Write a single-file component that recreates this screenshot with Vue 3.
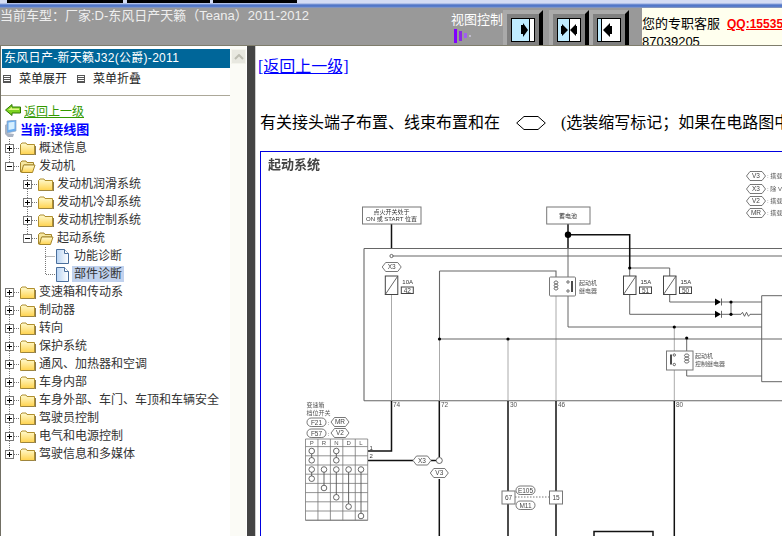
<template>
  <div class="page">
    <svg class="defs" width="0" height="0">
      <defs>
        <linearGradient id="folderFill" x1="0" y1="0" x2="0" y2="1">
          <stop offset="0" stop-color="#fffbd0" />
          <stop offset="1" stop-color="#ffd24d" />
        </linearGradient>
        <linearGradient id="docFill" x1="0" y1="0" x2="1" y2="0">
          <stop offset="0" stop-color="#b8d4f4" />
          <stop offset="1" stop-color="#ffffff" />
        </linearGradient>
      </defs>
    </svg>

    <div class="strip">
      <span class="tab first"></span>
      <span class="tab second"></span>
      <span class="tab third"></span>
    </div>

    <header class="top">
      <div class="car">当前车型：厂家:D-东风日产天籁（Teana）2011-2012</div>
      <div class="view">
        <div class="view-label">视图控制</div>
        <svg class="bars" width="18" height="15" viewBox="0 0 18 15">
          <path d="M0 0h3v14H0z" fill="#8000ff" />
          <path d="M5 2h3v10H5z" fill="#8a2be2" />
          <path d="M10 4h3v5h-3z" fill="#a060f0" />
          <path d="M15 6.500h2v1h-2z" fill="#e8e0ff" />
        </svg>
      </div>
      <div class="view-btns">
        <div class="view-btn">
          <svg width="24" height="24" viewBox="0 0 24 24">
            <rect x=".5" y=".5" width="23" height="23" fill="#c0ecff" stroke="#000" />
            <rect x="19" y="1" width="4" height="22" fill="#fff" />
            <path d="M18.5 1v22" stroke="#000" />
            <path d="M11 7h2V5l5 7-5 7v-3h-2z" fill="#000" transform="translate(-1 0)" />
          </svg>
        </div>
        <div class="view-btn">
          <svg width="24" height="24" viewBox="0 0 24 24">
            <rect x=".5" y=".5" width="23" height="23" fill="#fff" stroke="#000" />
            <rect x="1" y="1" width="11" height="22" fill="#c0ecff" />
            <path d="M12.5 1v22" stroke="#000" />
            <path d="M4 8h1V6l6 6-6 6v-2H4zM20 8h-1V6l-6 6 6 6v-2h1z" fill="#000" />
          </svg>
        </div>
        <div class="view-btn">
          <svg width="24" height="24" viewBox="0 0 24 24">
            <rect x=".5" y=".5" width="23" height="23" fill="#fff" stroke="#000" />
            <rect x="1" y="1" width="3" height="22" fill="#c0ecff" />
            <path d="M4.5 1v22" stroke="#000" />
            <path d="M13 8h2v8h-2v3l-7-7 7-7z" fill="#000" />
          </svg>
        </div>
      </div>
      <div class="service">
        <div class="service-line">您的专职客服<a class="qq">QQ:15535</a></div>
        <div class="service-line second-line">87039205</div>
      </div>
    </header>

    <main class="body">
      <aside class="left">
        <div class="left-inner">
          <div class="model">东风日产-新天籁J32(公爵)-2011</div>
          <div class="menu">
            <span class="menu-item"><i class="menu-icon"></i>菜单展开</span>
            <span class="menu-item"><i class="menu-icon"></i>菜单折叠</span>
          </div>
          <div class="tree">
            <a class="back">
              <svg width="16" height="12" viewBox="0 0 16 12">
                <path d="M.5 6 7 .5V3h8.500v6H7v2.500z" fill="#7ed321" stroke="#2f7a00" />
                <path d="M3 6l4-3v1.500h7V6z" fill="#e4f78a" />
              </svg>
              <span>返回上一级</span>
            </a>
            <div class="current">
              <svg width="13" height="18" viewBox="0 0 13 18">
                <path d="M3 1l9-1v11l-9 2z" fill="#6aaef0" stroke="#8fa5c0" stroke-width=".7" />
                <path d="M4.500 2.500l6-.7v7l-6 1.200z" fill="#d5efff" />
                <path d="M1 5l2-1v9l7 1-1 3H4l-3-3z" fill="#aab4c4" />
              </svg>
              <span>当前:接线图</span>
            </div>
            <div v-for="row in rows" :key="row.label" class="row" :class="'level' + row.level">
              <svg v-if="row.kind !== 'doc'" class="node" width="18" height="18" viewBox="0 0 18 18">
                <path v-if="row.up" d="M8.500 0v5" class="dots" />
                <path v-if="row.down" d="M8.500 14v4" class="dots" />
                <path d="M13 9.500h5" class="dots" />
                <rect x="4.500" y="5.500" width="8" height="8" fill="#fff" stroke="#777" />
                <path d="M6 9.500h5" stroke="#000" />
                <path v-if="!row.open" d="M8.500 7v5" stroke="#000" />
              </svg>
              <svg v-else class="node" width="18" height="18" viewBox="0 0 18 18">
                <path :d="row.last ? 'M8.500 0v9.500H18' : 'M8.500 0v18M8.500 9.500H18'" class="dots" />
              </svg>

              <svg v-if="row.kind === 'doc'" class="doc" width="13" height="15" viewBox="0 0 13 15">
                <path d="M.5.5h8l4 4v10H.5z" fill="url(#docFill)" stroke="#4a6f9c" />
                <path d="M8.500.5v4h4" fill="#fff" stroke="#4a6f9c" />
              </svg>
              <svg v-else-if="row.open" class="folder" width="16" height="13" viewBox="0 0 16 13">
                <path d="M.5 2.500 2 1h4l1 1.500h6.500V5H4L1.500 12H.5z" fill="#f6e7a0" stroke="#a5862a" />
                <path d="M3.500 5H15l-2.500 7.500h-11z" fill="url(#folderFill)" stroke="#a5862a" />
              </svg>
              <svg v-else class="folder" width="16" height="13" viewBox="0 0 16 13">
                <path d="M.5 2.500 2 1h4l1 1.500h7.500v10H.5z" fill="url(#folderFill)" stroke="#b08f2e" />
                <path d="M15.500 4v9H2" fill="none" stroke="#8a7a50" />
              </svg>
              <span class="label" :class="{ selected: row.selected }">{{ row.label }}</span>
            </div>
          </div>
        </div>
        <div class="scrollbar">
          <div class="scroll-up">
            <svg width="10" height="6" viewBox="0 0 10 6">
              <path d="M1 5l4-4 4 4" fill="none" stroke="#bdbdb2" stroke-width="2" />
            </svg>
          </div>
        </div>
      </aside>
      <div class="split"></div>

      <section class="content">
        <a class="up-link">[返回上一级]</a>
        <p class="note">
          有关接头端子布置、线束布置和在
          <svg class="note-hex" width="30" height="14" viewBox="0 0 30 14">
            <path d="M.7 7 8 .5h14L29.300 7 22 13.500H8z" fill="#fff" stroke="#000" />
          </svg>
          (选装缩写标记；如果在电路图中
        </p>
        <div class="figure">
          <svg class="diagram" width="530" height="390" viewBox="261 152 530 390">
            <text x="268" y="169" class="title">起动系统</text>

            <path v-for="d in lightWires" :key="d" :d="d" class="wire light" />
            <path v-for="d in thinWires" :key="d" :d="d" class="wire thin" />
            <path v-for="d in frameWires" :key="d" :d="d" class="wire frame" />
            <path v-for="d in heavyWires" :key="d" :d="d" class="wire heavy" />
            <path d="M515 497H549" class="wire dashed" />

            <circle v-for="p in dots" :key="p.join()" :cx="p[0]" :cy="p[1]" :r="p[2]" fill="#000" />

            <g class="box">
              <rect x="362.500" y="207" width="58.500" height="17" />
              <rect x="546.700" y="207" width="43.300" height="17" />
              <rect x="502" y="491" width="13" height="13" />
              <rect x="549.500" y="491" width="13" height="13" />
              <rect x="549.500" y="277" width="26" height="19" rx="1" />
              <rect x="666.500" y="351" width="26.500" height="19" />
            </g>
            <text x="391.500" y="214" class="small mid">点火开关处于</text>
            <text x="391.500" y="221" class="small mid">ON 或 START 位置</text>
            <text x="568" y="218" class="small mid">蓄电池</text>
            <text x="508.500" y="500" class="tiny mid">67</text>
            <text x="556" y="500" class="tiny mid">15</text>

            <g v-for="f in fuses" :key="f.no">
              <rect :x="f.x" y="276" width="12.500" height="18.500" class="fuse" />
              <path :d="`M${f.x} 294.500L${f.x + 12.500} 276`" class="wire thin" />
              <text :x="f.x + 17" y="284" class="small">{{ f.amp }}</text>
              <rect :x="f.x + 16" y="287" width="12" height="6.500" class="fuse" />
              <text :x="f.x + 22" y="292.500" class="tiny mid">{{ f.no }}</text>
            </g>

            <path d="M556 281c-2.500 0-2.500 3 0 3c-2.500 0-2.500 3 0 3c-2.500 0-2.500 3 0 3" class="wire thin" />
            <path d="M556 281c2.500 0 2.500 3 0 3c2.500 0 2.500 3 0 3c2.500 0 2.500 3 0 3" class="wire thin" />
            <path d="M572 281v11" class="wire heavy" />
            <circle cx="568" cy="282" r="1.200" class="pin" />
            <circle cx="568" cy="291" r="1.200" class="pin" />
            <text x="579" y="284.500" class="small gray">起动机</text>
            <text x="579" y="292.500" class="small gray">继电器</text>

            <path d="M686.700 354c-3 0-3 3 0 3c-3 0-3 3 0 3c-3 0-3 3 0 3c3 0 3-3 0-3c3 0 3-3 0-3c3 0 3-3 0-3" class="wire thin" />
            <path d="M671 354.500v10" class="wire heavy" />
            <circle cx="674.300" cy="355" r="1.200" class="pin" />
            <circle cx="674.300" cy="364.500" r="1.200" class="pin" />
            <text x="695" y="358" class="small gray">起动机</text>
            <text x="695" y="366" class="small gray">控制继电器</text>

            <path d="M715 298.500l6 3.500-6 3.500zM715 310.800l6 3.500-6 3.500z" fill="#000" />
            <path d="M721.500 298.500v7M721.500 310.800v7" class="wire thin" />
            <path d="M741 314.300l1.500-2 2 4 2-4 2 4 1.500-2" class="wire thin" fill="none" />

            <g v-for="h in hexes" :key="h.t + h.x + h.y">
              <path :d="hexPath(h.x, h.y, h.w, 9)" class="hex" />
              <text :x="h.x" :y="h.y + 2.300" class="tiny mid">{{ h.t }}</text>
            </g>
            <circle cx="391.500" cy="256" r="1.600" class="pin" />
            <circle cx="439.300" cy="460.500" r="3" class="pin" />
            <g v-for="o in ovals" :key="o.t">
              <rect :x="o.x" :y="o.y" :width="o.w" height="8.500" rx="4.200" class="hex" />
              <text :x="o.x + o.w / 2" :y="o.y + 6.500" class="tiny mid">{{ o.t }}</text>
            </g>

            <text v-for="l in legend" :key="l.y" x="767" :y="l.y" class="small gray">{{ l.t }}</text>
            <text v-for="n in wireNumbers" :key="n.t" :x="n.x" y="406.500" class="tiny gray">{{ n.t }}</text>

            <text x="306.500" y="406.500" class="small gray">变速箱</text>
            <text x="306.500" y="414.500" class="small gray">档位开关</text>
            <text x="327.500" y="424.500" class="small">:</text>
            <text x="327.500" y="435.500" class="small">:</text>

            <path :d="tableGrid" class="wire table" />
            <text v-for="(c, i) in columns" :key="c" :x="colX[i]" y="445" class="small mid gray">{{ c }}</text>
            <text x="369.500" y="449.500" class="small">1</text>
            <text x="369.500" y="458" class="small">2</text>
            <path v-for="c in switchLinks" :key="c.join()" :d="`M${colX[c[0]]} ${rowY[c[1]]}V${rowY[c[2]]}`" class="wire thin" />
            <circle v-for="c in switchPins" :key="c.join()" :cx="colX[c[0]]" :cy="rowY[c[1]]" r="2.800" class="pin" />

            <rect x="594" y="531.500" width="59" height="12" class="wire heavy" fill="none" />
          </svg>
        </div>
      </section>
    </main>
  </div>
</template>

<script setup>
const rows = [
  { label: '概述信息', level: 1, kind: 'folder', up: true, down: true },
  { label: '发动机', level: 1, kind: 'folder', up: true, open: true },
  { label: '发动机润滑系统', level: 2, kind: 'folder', up: true, down: true },
  { label: '发动机冷却系统', level: 2, kind: 'folder', up: true, down: true },
  { label: '发动机控制系统', level: 2, kind: 'folder', up: true, down: true },
  { label: '起动系统', level: 2, kind: 'folder', up: true, open: true },
  { label: '功能诊断', level: 3, kind: 'doc' },
  { label: '部件诊断', level: 3, kind: 'doc', last: true, selected: true },
  { label: '变速箱和传动系', level: 1, kind: 'folder', down: true },
  { label: '制动器', level: 1, kind: 'folder', up: true, down: true },
  { label: '转向', level: 1, kind: 'folder', up: true, down: true },
  { label: '保护系统', level: 1, kind: 'folder', up: true, down: true },
  { label: '通风、加热器和空调', level: 1, kind: 'folder', up: true, down: true },
  { label: '车身内部', level: 1, kind: 'folder', up: true, down: true },
  { label: '车身外部、车门、车顶和车辆安全', level: 1, kind: 'folder', up: true, down: true },
  { label: '驾驶员控制', level: 1, kind: 'folder', up: true, down: true },
  { label: '电气和电源控制', level: 1, kind: 'folder', up: true, down: true },
  { label: '驾驶信息和多媒体', level: 1, kind: 'folder', up: true },
]

// diagram coordinates are the same as the page pixels of the screenshot
const heavyWires = [
  'M391.5 224V248',
  'M568 224V248',
  'M568 234.7H629.7V268',
  'M391.5 401V451H368',
  'M368 460.5H413',
  'M431 460.5H436',
  'M439.3 401V457',
  'M439.3 479V536',
  'M508 401V491',
  'M508 504V536',
  'M556 401V491',
  'M556 504V536',
  'M674.3 401V536',
]
const frameWires = [
  'M364 248.5H782',
  'M364 248.5V400.7',
  'M364 400.7H782',
  'M391.5 256H782',
  'M439.5 271V339',
  'M439.5 271H556V277',
  'M439.5 339H782',
]
const thinWires = [
  'M568 248V327H761.7',
  'M629.7 295V314.3H715',
  'M629.7 268H669.7V276',
  'M669.7 295V302H715',
  'M721 302H761.7',
  'M721 314.3H741',
  'M750 314.3H761.7',
  'M731 302V314.3',
  'M761.7 295.7H782',
  'M761.7 295.7V381.7H782',
  'M686.7 338V354',
  'M686.7 363V376H761.7',
  'M629.7 248V276',
]
const lightWires = [
  'M391.5 295V400',
  'M439.5 339V400',
  'M508 339V400',
  'M556 296V400',
  'M674.3 327V400',
]
const dots = [
  [568, 234.7, 3.2],
  [629.7, 268, 1.6],
  [731, 302, 1.6],
  [731, 314.3, 1.6],
  [439.5, 339, 1.6],
  [508, 339, 1.6],
  [674.3, 327, 1.6],
  [686.7, 338, 1.6],
]
const fuses = [
  { x: 385.3, amp: '10A', no: '42' },
  { x: 623.5, amp: '15A', no: '51' },
  { x: 663.5, amp: '15A', no: '50' },
]
const hexes = [
  { x: 391.7, y: 267, w: 19, t: 'X3' },
  { x: 422, y: 460.5, w: 18, t: 'X3' },
  { x: 439.3, y: 473, w: 18, t: 'V3' },
  { x: 340, y: 422, w: 18, t: 'MR' },
  { x: 340, y: 433, w: 18, t: 'V2' },
  { x: 756, y: 176, w: 19, t: 'V3' },
  { x: 756, y: 189, w: 19, t: 'X3' },
  { x: 756, y: 201, w: 19, t: 'V2' },
  { x: 756, y: 213, w: 19, t: 'MR' },
]
const ovals = [
  { x: 307, y: 418, w: 19, t: 'F21' },
  { x: 307, y: 429, w: 19, t: 'F57' },
  { x: 516, y: 486, w: 19, t: 'E105' },
  { x: 516, y: 501, w: 19, t: 'M11' },
]
const legend = [
  { y: 178, t: ': 搭载' },
  { y: 191, t: ': 除 V' },
  { y: 203, t: ': 搭载' },
  { y: 215, t: ': 搭载' },
]
const wireNumbers = [
  { x: 393, t: '74' },
  { x: 441, t: '72' },
  { x: 510, t: '30' },
  { x: 558, t: '46' },
  { x: 676, t: '80' },
]

const columns = ['P', 'R', 'N', 'D', 'L']
const colX = [311.7, 324, 336.3, 348.6, 361]
const rowY = [451, 460.3, 469.5, 478.7, 488, 497.3, 506.6, 516]
const switchLinks = [
  [0, 0, 1], [0, 2, 3], [1, 2, 4], [2, 0, 1], [2, 2, 5], [3, 2, 6], [4, 2, 7],
]
const switchPins = [
  [0, 0], [0, 1], [0, 2], [0, 3],
  [1, 2], [1, 4],
  [2, 0], [2, 1], [2, 2], [2, 5],
  [3, 2], [3, 6],
  [4, 2], [4, 7],
]

let tableGrid = 'M305.5 439H367.7V520.3H305.5Z'
for (let i = 0; i < 9; i++) {
  const y = 446.6 + i * 9.2
  tableGrid += `M305.5 ${y}H367.7`
}
for (let i = 1; i < 5; i++) {
  const x = 305.5 + i * 12.44
  tableGrid += `M${x} 439V520.3`
}

function hexPath(cx, cy, w, h) {
  const a = w / 2
  const b = h / 2
  return `M${cx - a} ${cy}L${cx - a + 3.5} ${cy - b}H${cx + a - 3.5}L${cx + a} ${cy}L${cx + a - 3.5} ${cy + b}H${cx - a + 3.5}Z`
}
</script>

<style scoped>
.page {
  width: 782px;
  height: 536px;
  overflow: hidden;
  display: flex;
  flex-direction: column;
  background: #fff;
  font-family: "Liberation Sans", "Noto Sans CJK SC", sans-serif;
  font-size: 12px;
  color: #000;
}

.defs {
  position: absolute;
}

.strip {
  height: 8px;
  flex: none;
  display: flex;
  background: linear-gradient(#d4dcf4 0, #d4dcf4 3px, #8fa6dc 4px, #4f74c6 5px, #5c80cc 7px, #a8a8b0 8px);
}

.tab {
  height: 3px;
  background: #000;
}

.first {
  width: 116px;
  margin-left: 7px;
}

.second {
  width: 83px;
  margin-left: 4px;
}

.third {
  width: 84px;
  margin-left: 3px;
}

.top {
  height: 38px;
  flex: none;
  display: flex;
  background: #999;
  border-bottom: 1px solid #7f7d6c;
  box-sizing: border-box;
}

.car {
  width: 451px;
  font-size: 13px;
  line-height: 16px;
  color: #eee;
  white-space: nowrap;
}

.view {
  width: 52px;
  color: #fff;
  font-size: 13px;
  line-height: 22px;
  padding-top: 1px;
}

.view-label {
  height: 20px;
  white-space: nowrap;
}

.bars {
  display: block;
  margin-left: 3px;
}

.view-btns {
  width: 139px;
  flex: none;
  display: flex;
  align-items: flex-end;
}

.view-btn {
  width: 40px;
  height: 35px;
  box-sizing: border-box;
  padding: 4px 0 0 4px;
  background: #808080;
  border-style: solid;
  border-width: 4px 4px 0 4px;
  border-color: #aaa #000 #aaa #aaa;
}

.view-btn:first-child {
  margin-right: 6px;
}

.view-btn svg {
  display: block;
}

.service {
  flex: 1;
  background: #ffffee;
  overflow: hidden;
  white-space: nowrap;
  font-size: 13px;
  line-height: 15px;
  padding-top: 8px;
}

.qq {
  margin-left: 7px;
  color: #f00;
  font-size: 12px;
  font-weight: bold;
  text-decoration: underline;
}

.service-line {
  height: 14px;
}

.second-line {
  margin-top: 4px;
}

.body {
  flex: 1;
  min-height: 0;
  display: flex;
}

.left {
  width: 246px;
  flex: none;
  box-sizing: border-box;
  display: flex;
  border-left: 1px solid #716f64;
}

.left-inner {
  width: 229px;
  flex: none;
  overflow: hidden;
  padding-top: 3px;
}

.model {
  height: 19px;
  margin: 0 0 0 1px;
  padding-left: 2px;
  background: #006699;
  color: #fff;
  font-size: 12px;
  line-height: 19px;
  letter-spacing: .3px;
  white-space: nowrap;
}

.menu {
  height: 28px;
  box-sizing: border-box;
  display: flex;
  align-items: flex-start;
  padding-top: 2px;
  border-bottom: 1px solid #aca899;
  color: #222;
  margin-bottom: 6px;
  line-height: 18px;
}

.menu-item {
  display: flex;
  align-items: center;
  width: 72px;
  padding-left: 2px;
}

.menu-icon {
  width: 8px;
  height: 8px;
  margin-right: 8px;
  box-sizing: border-box;
  border: 1px solid #555;
  background: repeating-linear-gradient(#fff 0, #fff 1px, #555 1px, #555 2px);
}

.tree {
  color: #333;
}

.back {
  height: 18px;
  box-sizing: border-box;
  display: flex;
  align-items: center;
  padding: 0 0 2px 4px;
  gap: 3px;
  color: #339900;
  text-decoration: underline;
}

.current {
  height: 19px;
  box-sizing: border-box;
  display: flex;
  align-items: center;
  gap: 3px;
  padding: 0 0 2px 3px;
  color: #0000ff;
  font-size: 13px;
  font-weight: bold;
  white-space: nowrap;
}

.row {
  height: 18px;
  display: flex;
  align-items: center;
  white-space: nowrap;
}

.level2 {
  padding-left: 18px;
}

.level3 {
  padding-left: 36px;
}

.node {
  flex: none;
}

.dots {
  fill: none;
  stroke: #777;
  stroke-dasharray: 1 1;
}

.folder {
  flex: none;
  margin: 0 2px 0 1px;
}

.doc {
  flex: none;
  margin: 0 4px 0 1px;
}

.label {
  padding: 1px 2px;
  line-height: 14px;
  margin-left: -1px;
}

.selected {
  background: #c1d2ee;
}

.scrollbar {
  width: 16px;
  flex: none;
  background: #fbfbf6;
  padding: 3px 0 0 1px;
  box-sizing: border-box;
}

.scroll-up {
  width: 15px;
  height: 15px;
  display: flex;
  align-items: center;
  justify-content: center;
  background: #e8e8e0;
  border: 1px solid #f4f4ec;
  box-sizing: border-box;
}

.split {
  width: 8px;
  flex: none;
  margin-left: 1px;
  background: #444;
}

.content {
  flex: 1;
  min-width: 0;
  overflow: hidden;
  box-sizing: border-box;
  padding: 11px 0 0 2px;
  border-left: 1px solid #ccc;
  font-family: "Liberation Serif", "Noto Sans CJK SC", serif;
  font-size: 16px;
}

.up-link {
  display: block;
  line-height: 19px;
  color: #0000ff;
  text-decoration: underline;
  white-space: nowrap;
}

.note {
  margin: 37px 0 0 2px;
  height: 20px;
  line-height: 20px;
  white-space: nowrap;
}

.note-hex {
  vertical-align: -2px;
  margin: 0 11px 0 12px;
}

.figure {
  margin: 18px 0 0 2px;
  border: 1px solid #0000e0;
  border-right: 0;
  width: 560px;
  height: 420px;
}

.diagram {
  display: block;
  filter: blur(.3px);
}

.title {
  font-size: 13px;
  font-weight: bold;
  fill: #444;
}

.wire {
  fill: none;
}

.light {
  stroke: #aaa;
  stroke-width: 1;
}

.thin {
  stroke: #555;
  stroke-width: .9;
}

.frame {
  stroke: #666;
  stroke-width: 1.100;
}

.heavy {
  stroke: #111;
  stroke-width: 1.500;
}

.dashed {
  stroke: #555;
  stroke-width: .8;
  stroke-dasharray: 1.500 1.500;
}

.table {
  stroke: #777;
  stroke-width: .8;
}

.box rect {
  fill: #fff;
  stroke: #777;
  stroke-width: 1;
}

.fuse {
  fill: #fff;
  stroke: #444;
  stroke-width: 1;
}

.hex {
  fill: #fff;
  stroke: #555;
  stroke-width: .8;
}

.pin {
  fill: #fff;
  stroke: #444;
  stroke-width: .8;
}

.small {
  font-family: "Liberation Sans", "Noto Sans CJK SC", sans-serif;
  font-size: 6px;
  fill: #333;
}

.tiny {
  font-family: "Liberation Sans", "Noto Sans CJK SC", sans-serif;
  font-size: 6.500px;
  fill: #444;
}

.mid {
  text-anchor: middle;
}

.gray {
  fill: #555;
}
</style>
